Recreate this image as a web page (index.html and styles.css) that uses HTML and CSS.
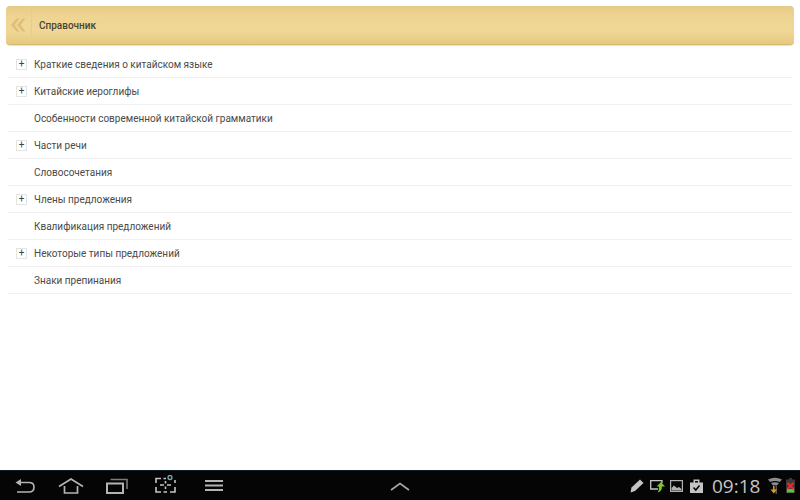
FILE: index.html
```html
<!DOCTYPE html>
<html lang="ru">
<head>
    <meta charset="UTF-8">
    <title>Справочник</title>
    <link rel="stylesheet" href="styles.css">
</head>
<body>
    <div class="app">
        <main class="content">
            <header class="title-bar">
                <div class="back-btn">
                    <svg width="15" height="14" viewBox="0 0 15 14"><path d="M5.5 0.5 L0 7 L5.5 13.5 H8.5 L3.5 7 L8.5 0.5 Z M11.5 0.5 L6 7 L11.5 13.5 H14.5 L9.5 7 L14.5 0.5 Z" fill="#dfbf78"/></svg>
                </div>
                <h1 class="title">Справочник</h1>
            </header>

            <ul class="topics">
                <li class="topic"><span class="expander">+</span><span class="topic-name">Краткие сведения о китайском языке</span></li>
                <li class="topic"><span class="expander">+</span><span class="topic-name">Китайские иероглифы</span></li>
                <li class="topic"><span class="topic-name no-expander">Особенности современной китайской грамматики</span></li>
                <li class="topic"><span class="expander">+</span><span class="topic-name">Части речи</span></li>
                <li class="topic"><span class="topic-name no-expander">Словосочетания</span></li>
                <li class="topic"><span class="expander">+</span><span class="topic-name">Члены предложения</span></li>
                <li class="topic"><span class="topic-name no-expander">Квалификация предложений</span></li>
                <li class="topic"><span class="expander">+</span><span class="topic-name">Некоторые типы предложений</span></li>
                <li class="topic"><span class="topic-name no-expander">Знаки препинания</span></li>
            </ul>
        </main>

        <footer class="system-bar">
            <div class="nav-left">
                <svg class="icon-back" width="20" height="14" viewBox="0 0 20 14"><path d="M5 3.5 H14 Q19 3.5 19 8 Q19 13 14 13 H2" fill="none" stroke="#b4b4b4" stroke-width="1.6"/><path d="M0.5 3.5 L6 0 V7 Z" fill="#b4b4b4"/></svg>
                <svg class="icon-home" width="26" height="16" viewBox="0 0 26 16"><path d="M1 8.5 L13 1 L25 8.5 M6.5 8 V15 H19.5 V8" fill="none" stroke="#b4b4b4" stroke-width="1.7"/></svg>
                <svg class="icon-recent" width="22" height="16" viewBox="0 0 22 16"><path d="M1 5.5 H17 V15 H1 Z" fill="none" stroke="#b4b4b4" stroke-width="2"/><path d="M4.5 1.5 H21 V11" fill="none" stroke="#7c7c7c" stroke-width="1.6"/></svg>
                <svg class="icon-scan" width="21" height="18" viewBox="0 0 21 18"><path d="M1 8 V3.5 H6 M1 12 V17 H6 M20 12 V17 H15 M20 5 V8 M8.5 3.5 H11 M8.5 17 H12 M5 10 H9 M12 10 H16 M10.5 6 V8.5 M10.5 11.5 V14" fill="none" stroke="#c4c4c4" stroke-width="1.6"/><circle cx="15" cy="2.5" r="2" fill="none" stroke="#7aa8b4" stroke-width="1.3"/></svg>
                <svg class="icon-menu" width="18" height="11" viewBox="0 0 18 11"><path d="M0 1 H18 M0 5.5 H18 M0 10 H18" stroke="#b4b4b4" stroke-width="1.8"/></svg>
            </div>
            <svg class="nav-up" width="20" height="9" viewBox="0 0 20 9"><path d="M1 8 L10 1.5 L19 8" fill="none" stroke="#a8a8a8" stroke-width="1.6"/></svg>
            <div class="status">
                <svg class="icon-pencil" width="14" height="14" viewBox="0 0 14 14"><path d="M10 0.5 L13.5 4 L5 12 L0.5 13.5 L1.5 8.5 Z" fill="#c4c4c4"/></svg>
                <svg class="icon-sync" width="15" height="14" viewBox="0 0 15 14"><path d="M8 10 H0.7 V1.7 H12 V4" fill="none" stroke="#c4c4c4" stroke-width="1.3"/><path d="M6.5 7.5 H9 Q9.5 11 7.5 13.5 Q12 12.5 12 7.5 H15 L11 3 Z" fill="#7cc62c"/></svg>
                <svg class="icon-picture" width="13" height="12" viewBox="0 0 13 12"><rect x="0.6" y="0.6" width="11.8" height="10.8" fill="none" stroke="#b0b0b0" stroke-width="1.2"/><path d="M1.5 10.5 V8 L4 5.5 L7 8 L9 7 L11.5 9 V10.5 Z" fill="#b0b0b0"/></svg>
                <svg class="icon-bag" width="13" height="14" viewBox="0 0 13 14"><path d="M0 3.5 H13 V14 H0 Z M3.5 3.5 V0.5 H9.5 V3.5" fill="#c4c4c4"/><path d="M5 2 H8 V3.5 H5 Z" fill="#050505"/><path d="M3.5 8.5 L5.8 11 L9.5 6.5" fill="none" stroke="#050505" stroke-width="1.5"/></svg>
                <span class="clock">09:18</span>
                <svg class="icon-wifi" width="14" height="17" viewBox="0 0 14 17"><path d="M0 2.5 Q7 -1 14 2.5 L11.8 5 Q7 3 2.2 5 Z M3 6 Q7 4.5 11 6 L9 8.5 Q7 8 5 8.5 Z" fill="#8c8c8c"/><path d="M7.5 9 H9 V17 H7.5 Z" fill="#555"/><path d="M5 9 H6.5 V12.5 H9 L5.8 16.5 L2.5 12.5 H5 Z" fill="#dd9a2a"/></svg>
                <svg class="icon-battery" width="9" height="15" viewBox="0 0 9 15"><path d="M3 0 H6 V1.5 H9 V15 H0 V1.5 H3 Z" fill="#3a3a3a"/><rect x="1" y="11" width="7" height="3.5" fill="#5cc03c"/><path d="M1.5 5 L7.5 11 M7.5 5 L1.5 11" stroke="#e62c2c" stroke-width="2.2"/></svg>
            </div>
        </footer>
    </div>
</body>
</html>
```

FILE: styles.css
```css
* {
    margin: 0;
    padding: 0;
    box-sizing: border-box;
}

html, body {
    height: 100%;
    overflow: hidden;
}

body {
    font-family: Roboto, 'Liberation Sans', sans-serif;
    background: #fff;
    color: #444;
}

.app {
    height: 500px;
    display: flex;
    flex-direction: column;
}

.content {
    flex: 1;
    padding: 6px 6px 0;
}

/* Title bar */
.title-bar {
    height: 39px;
    display: flex;
    align-items: center;
    background: linear-gradient(#e6ca88, #efd592 30%, #f0d796 65%, #e6c981);
    border-bottom: 1px solid #d8b76c;
    border-radius: 4px;
    box-shadow: 0 1px 1px #ece2c8;
}

.back-btn {
    width: 26px;
    height: 100%;
    flex: none;
    display: flex;
    align-items: center;
    justify-content: center;
    padding-bottom: 1px;
    border-right: 1px solid #e8cd8a;
}

.title {
    margin-left: 7px;
    font-size: 10px;
    font-weight: 500;
    color: #4a4536;
}

/* Topics list */
.topics {
    list-style: none;
    margin: 6px 2px 0;
}

.topic {
    height: 27px;
    display: flex;
    align-items: center;
    border-bottom: 1px solid #f0f0f0;
}

.expander {
    width: 11px;
    height: 11px;
    margin-left: 8px;
    flex: none;
    display: flex;
    align-items: center;
    justify-content: center;
    border: 1px solid #e4e4e4;
    font-size: 10px;
    line-height: 1;
    color: #444;
}

.topic-name {
    margin-left: 7px;
    font-size: 10px;
    color: #4a4a4a;
}

.topic-name.no-expander {
    margin-left: 26px;
}

/* Android system bar */
.system-bar {
    height: 30px;
    flex: none;
    display: flex;
    align-items: center;
    justify-content: space-between;
    position: relative;
    background: #050505;
    border-top: 1px solid #0c1a26;
}

.nav-left {
    display: flex;
    align-items: center;
    padding-left: 15px;
}

.icon-home {
    margin-left: 23px;
}

.icon-recent {
    margin-left: 22px;
}

.icon-scan {
    margin-left: 27px;
    margin-bottom: 3px;
}

.icon-menu {
    margin-left: 29px;
}

.nav-up {
    position: absolute;
    left: 390px;
    top: 11px;
}

.status {
    display: flex;
    align-items: center;
    padding-right: 5px;
}

.icon-sync {
    margin-left: 6px;
}

.icon-picture {
    margin-left: 5px;
}

.icon-bag {
    margin-left: 7px;
}

.clock {
    font-family: 'Open Sans', Roboto, sans-serif;
    font-size: 19px;
    font-weight: 400;
    width: 48px;
    margin-left: 9px;
    color: #c4c4c4;
}

.icon-wifi {
    margin-left: 8px;
}

.icon-battery {
    margin-left: 4px;
}
```
